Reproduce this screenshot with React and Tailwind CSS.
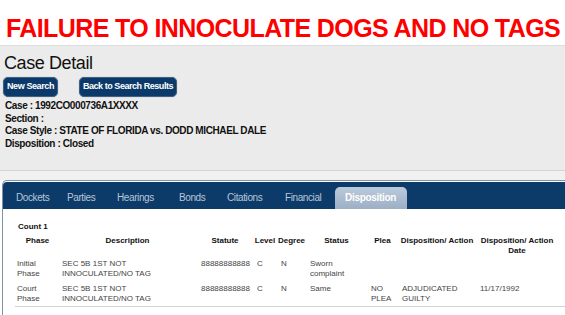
export default function App() {
  const tabs = [
    { label: "Dockets", w: "w-[51px]" },
    { label: "Parties", w: "w-[50px]" },
    { label: "Hearings", w: "w-[62px]" },
    { label: "Bonds", w: "w-[48px]" },
    { label: "Citations", w: "w-[58px]" },
    { label: "Financial", w: "w-[59px]" },
  ];
  const rows = [
    ["Initial Phase", "SEC 5B 1ST NOT INNOCULATED/NO TAG", "88888888888", "C", "N", "Sworn complaint", "", "", ""],
    ["Court Phase", "SEC 5B 1ST NOT INNOCULATED/NO TAG", "88888888888", "C", "N", "Same", "NO PLEA", "ADJUDICATED GUILTY", "11/17/1992"],
  ];
  return (
    <div className="w-[565px] h-[315px] overflow-hidden bg-white font-['Liberation_Sans',Arial,sans-serif]">
      <div className="h-[45px] pt-[16px] pl-[6px]">
        <div className="text-[25px] leading-[25px] font-bold tracking-[-0.6px] text-[#ff0000] whitespace-nowrap">
          FAILURE TO INNOCULATE DOGS AND NO TAGS
        </div>
      </div>
      <div className="h-[126px] bg-[#ebebeb] border-t border-[#dedede] border-b border-b-[#d4d4d4]">
        <div className="pt-[8px] pl-[4px] text-[18px] leading-[18px] tracking-[-0.4px] text-[#111]">Case Detail</div>
        <div className="mt-[5px] ml-[3px] flex gap-[21px]">
          <div className="w-[55px] h-[20px] rounded-[5px] bg-[#0b3a6a] border border-[#3f6185] shadow-[0_0_1px_#888] flex items-center justify-center text-white text-[9px] font-bold tracking-[-0.4px]">
            New Search
          </div>
          <div className="w-[98px] h-[20px] rounded-[5px] bg-[#0b3a6a] border border-[#3f6185] shadow-[0_0_1px_#888] flex items-center justify-center text-white text-[9px] font-bold tracking-[-0.45px]">
            Back to Search Results
          </div>
        </div>
        <div className="mt-[3px] pl-[5px] text-[10px] leading-[12.5px] font-bold tracking-[-0.4px] text-[#111]">
          <div>Case : 1992CO000736A1XXXX</div>
          <div>Section :</div>
          <div>Case Style : STATE OF FLORIDA vs. DODD MICHAEL DALE</div>
          <div>Disposition : Closed</div>
        </div>
      </div>
      <div className="h-[9px] bg-[#f1f1f1]"></div>
      <div className="ml-[2px] h-[200px] bg-white border-l border-t border-[#7f94ab] rounded-tl-[5px] pt-px">
        <div className="h-[27px] bg-[#0c3a69] rounded-tl-[4px] flex items-end pl-[4px]">
          {tabs.map((t) => (
            <div key={t.label} className={`${t.w} h-[22px] pl-[9px] text-[10px] leading-[22px] tracking-[-0.4px] text-[#b7c6d8] whitespace-nowrap`}>
              {t.label}
            </div>
          ))}
          <div className="w-[72px] h-[22px] pl-[10px] rounded-t-[5px] bg-gradient-to-b from-[#bccada] to-[#9cafc5] text-[10px] leading-[22px] font-bold tracking-[-0.3px] text-white whitespace-nowrap">
            Disposition
          </div>
        </div>
        <div className="mt-[13px] pl-[15px] text-[8px] leading-[10px] font-bold text-[#111]">Count 1</div>
        <table className="mt-[4px] ml-[10px] table-fixed border-collapse w-[545px] text-[8px] leading-[10px]">
          <colgroup>
            <col className="w-[45px]" />
            <col className="w-[139px]" />
            <col className="w-[56px]" />
            <col className="w-[24px]" />
            <col className="w-[29px]" />
            <col className="w-[61px]" />
            <col className="w-[31px]" />
            <col className="w-[78px]" />
            <col className="w-[82px]" />
          </colgroup>
          <thead>
            <tr className="font-bold text-[#111] align-top">
              <th className="p-0 pl-[4px] text-center h-[21px]">Phase</th>
              <th className="p-0 text-center">Description</th>
              <th className="p-0 text-center">Statute</th>
              <th className="p-0 text-center whitespace-nowrap">Level</th>
              <th className="p-0 text-center">Degree</th>
              <th className="p-0 text-center">Status</th>
              <th className="p-0 text-center">Plea</th>
              <th className="p-0 text-center whitespace-nowrap">Disposition/ Action</th>
              <th className="p-0 text-center">Disposition/ Action Date</th>
            </tr>
          </thead>
          <tbody>
            {rows.map((r, i) => (
              <tr key={i} className="align-top text-[#444]">
                {r.map((c, j) => (
                  <td key={j} className={`pl-[4px] pr-0 pt-[2px] ${i === 0 ? "pb-[3px]" : "pb-[2px]"}`}>
                    {c}
                  </td>
                ))}
              </tr>
            ))}
          </tbody>
        </table>
        <div className="ml-[12px] h-px bg-[#d2d2d2]"></div>
      </div>
    </div>
  );
}
